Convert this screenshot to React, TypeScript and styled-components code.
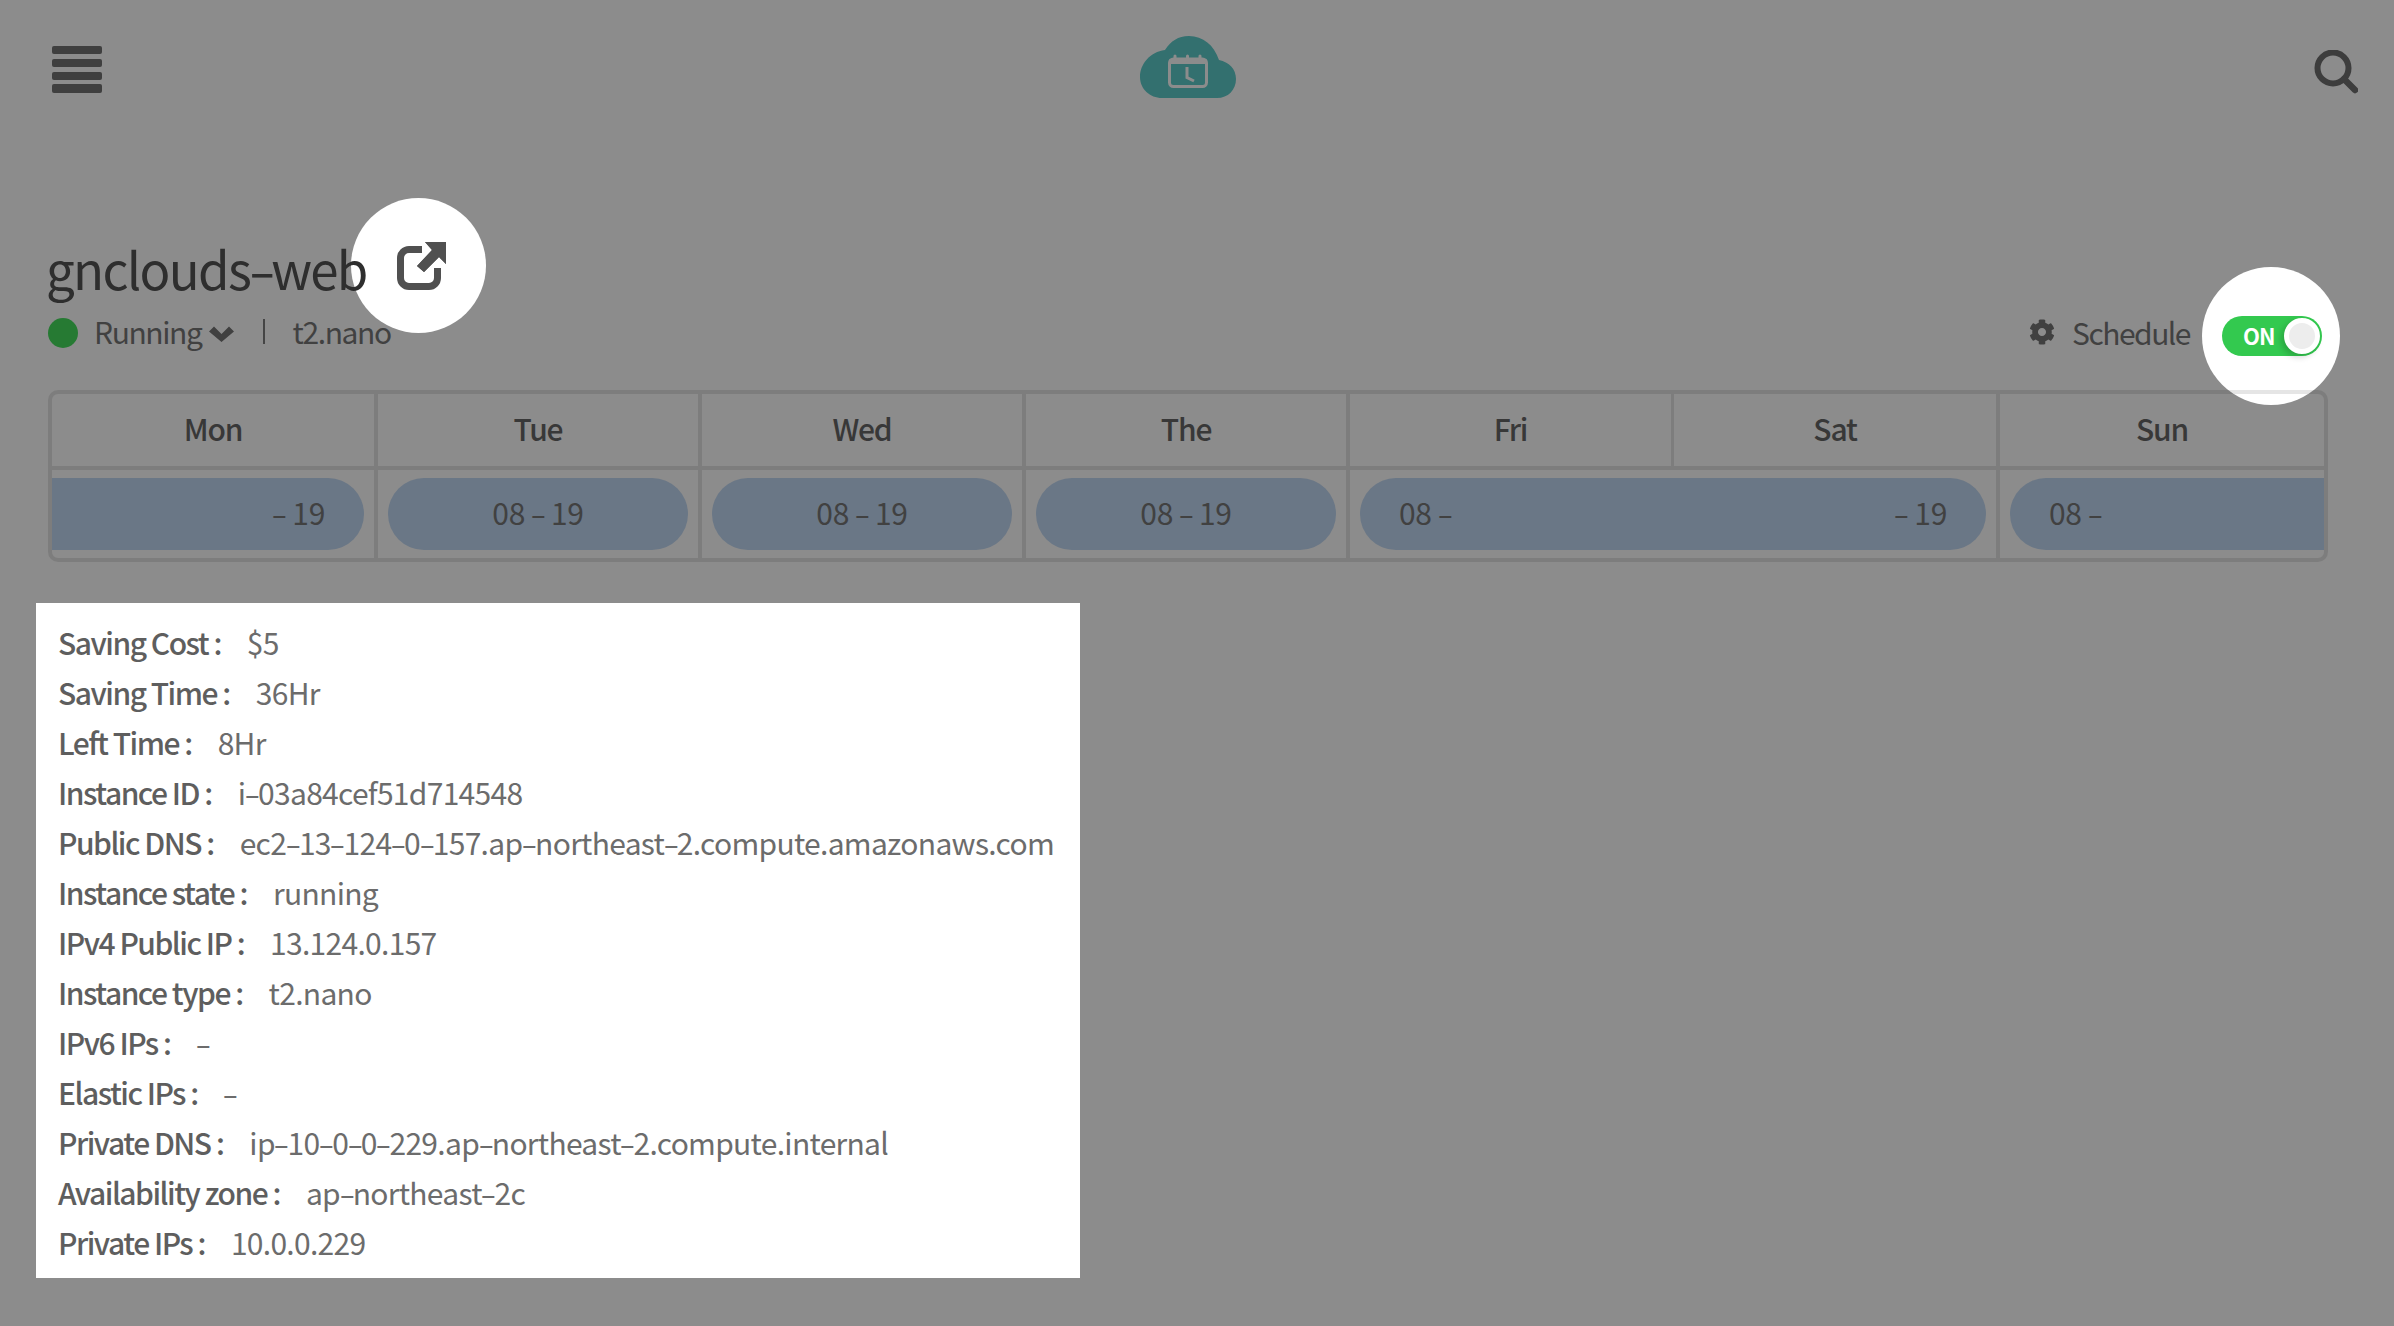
import React from "react";
import styled, { createGlobalStyle } from "styled-components";
import { FaCog } from "react-icons/fa";

const Global = createGlobalStyle`
  html, body { margin: 0; padding: 0; background: #8c8c8c; }
  body { font-family: "Noto Sans CJK KR", "Noto Sans", sans-serif; }
  * { box-sizing: border-box; }
`;

const Page = styled.div`
  position: relative;
  isolation: isolate;
  width: 2394px;
  height: 1326px;
  overflow: hidden;
  background: #8c8c8c;
`;

const TopBar = styled.header`
  display: grid;
  grid-template-columns: 1088px 96px 1fr;
  align-items: start;
  height: 62px;
  margin-top: 36px;
  padding: 0 36px 0 52px;
`;

const Burger = styled.div`
  display: flex;
  flex-direction: column;
  gap: 4.4px;
  width: 50px;
  margin-top: 10px;
`;

const BurgerBar = styled.span`
  display: block;
  height: 8.4px;
  border-radius: 2px;
  background: #3f3f3f;
`;

const SearchButton = styled.div`
  justify-self: end;
  width: 44px;
  height: 44px;
  margin-top: 14px;
  display: flex;
`;

const Summary = styled.section`
  position: relative;
  display: flex;
  justify-content: space-between;
  align-items: flex-end;
  height: 260px;
  padding: 0 72px 0 48px;
`;

const TitleBlock = styled.div`
  position: relative;
  padding-bottom: 6px;
`;

const Title = styled.h1`
  position: relative;
  z-index: 1;
  margin: 0 0 8px -2px;
  font-size: 51px;
  font-weight: 400;
  line-height: 68px;
  letter-spacing: -1.7px;
  color: #2e2e2e;
`;

const LinkSpot = styled.div`
  position: absolute;
  z-index: 0;
  left: 303px;
  top: -36px;
  width: 135px;
  height: 135px;
  border-radius: 50%;
  background: #fff;
  display: flex;
  align-items: center;
  justify-content: center;
  padding-left: 6px;
`;

const Meta = styled.div`
  position: relative;
  z-index: 1;
  display: flex;
  align-items: center;
  height: 42px;
  font-size: 30px;
  letter-spacing: -1.4px;
  color: #414141;
`;

const StatusDot = styled.span`
  width: 30px;
  height: 30px;
  border-radius: 50%;
  background: #267a33;
  margin: 4px 16px 0 0;
`;

const ChevronWrap = styled.span`
  display: flex;
  margin: 6px 0 0 7px;
`;

const MetaDivider = styled.span`
  width: 2px;
  height: 25px;
  background: #454545;
  margin: 0 28px 0 29px;
`;

const ScheduleControl = styled.div`
  display: flex;
  align-items: center;
  height: 40px;
  margin-bottom: 2px;
  font-size: 30px;
  letter-spacing: -1.5px;
  color: #414141;
`;

const ScheduleLabel = styled.div`
  display: flex;
  align-items: center;
  margin-bottom: 9px;
`;

const GearWrap = styled.span`
  display: flex;
  margin-right: 17px;
  color: #404040;
`;

const ToggleTrack = styled.div`
  position: relative;
  width: 100px;
  height: 40px;
  margin-left: 32px;
  border-radius: 20px;
  display: flex;
  align-items: center;
  z-index: 0;
  &::before {
    content: "";
    position: absolute;
    z-index: -2;
    left: -20px;
    top: -49px;
    width: 138px;
    height: 138px;
    border-radius: 50%;
    background: #fff;
  }
  &::after {
    content: "";
    position: absolute;
    inset: 0;
    z-index: -1;
    border-radius: 20px;
    background: #33c94f;
  }
`;

const ToggleLabel = styled.span`
  margin: 0 0 3px 21px;
  font-size: 22px;
  font-weight: 700;
  letter-spacing: -1px;
  color: #fff;
`;

const ToggleKnob = styled.span`
  position: absolute;
  right: 2px;
  top: 2px;
  width: 36px;
  height: 36px;
  border-radius: 50%;
  border: 5px solid #fff;
  background: #ededed;
  box-shadow: -3px 3px 6px rgba(0, 0, 0, 0.18);
`;

const WeekTable = styled.section`
  position: relative;
  z-index: 1;
  margin: 32px 0 0 48px;
  width: 2280px;
  border: 4px solid rgba(0, 0, 0, 0.1);
  border-radius: 10px;
`;

const WeekGrid = styled.div`
  display: grid;
  grid-template-columns: 326px 324px 324px 324px 324px 326px 1fr;
`;

const DayHead = styled.div<{ $rule: number }>`
  height: 76px;
  padding-bottom: 5px;
  display: flex;
  align-items: center;
  justify-content: center;
  border-bottom: 4px solid rgba(0, 0, 0, 0.1);
  border-right: ${(p) => p.$rule}px solid rgba(0, 0, 0, 0.1);
  font-size: 30px;
  font-weight: 500;
  letter-spacing: -1.2px;
  color: #383838;
`;

const DayCell = styled.div<{ $span?: number; $last?: boolean }>`
  grid-column: span ${(p) => p.$span ?? 1};
  height: 88px;
  padding-top: 8px;
  border-right: ${(p) => (p.$last ? "0" : "4px solid rgba(0, 0, 0, 0.1)")};
`;

const TimeBar = styled.div<{ $open: "left" | "right" | "none" }>`
  height: 72px;
  display: flex;
  align-items: center;
  justify-content: ${(p) => (p.$open === "none" ? "space-between" : p.$open === "left" ? "flex-end" : "flex-start")};
  padding: 0 39px 5px;
  margin: ${(p) => (p.$open === "left" ? "0 10px 0 0" : p.$open === "right" ? "0 0 0 10px" : "0 10px")};
  border-radius: ${(p) => (p.$open === "left" ? "0 36px 36px 0" : p.$open === "right" ? "36px 0 0 36px" : "36px")};
  background: #6a7786;
  font-size: 30px;
  letter-spacing: -0.3px;
  color: #414141;
`;

const CenteredTime = styled.span`
  flex: 1;
  text-align: center;
`;

const InfoCard = styled.section`
  margin: 41px 0 0 36px;
  width: 1044px;
  height: 675px;
  padding: 14px 22px;
  background: #fff;
`;

const InfoRow = styled.div`
  display: flex;
  align-items: center;
  height: 50px;
  font-size: 30px;
  letter-spacing: -0.7px;
  color: #6c6c6c;
  white-space: nowrap;
`;

const InfoLabel = styled.span`
  font-weight: 500;
  letter-spacing: -1.5px;
  color: #5e5e5e;
  margin-right: 26px;
`;

const Dash = styled.span`
  display: inline-block;
  margin: 0 0.05em;
  transform: scaleX(1.55);
`;

const withDashes = (text: string) =>
  text.split("-").flatMap((part, i) => (i === 0 ? [part] : [<Dash key={i}>-</Dash>, part]));

const days = ["Mon", "Tue", "Wed", "The", "Fri", "Sat", "Sun"];

const info: [string, string][] = [
  ["Saving Cost", "$5"],
  ["Saving Time", "36Hr"],
  ["Left Time", "8Hr"],
  ["Instance ID", "i-03a84cef51d714548"],
  ["Public DNS", "ec2-13-124-0-157.ap-northeast-2.compute.amazonaws.com"],
  ["Instance state", "running"],
  ["IPv4 Public IP", "13.124.0.157"],
  ["Instance type", "t2.nano"],
  ["IPv6 IPs", "-"],
  ["Elastic IPs", "-"],
  ["Private DNS", "ip-10-0-0-229.ap-northeast-2.compute.internal"],
  ["Availability zone", "ap-northeast-2c"],
  ["Private IPs", "10.0.0.229"],
];

const CloudLogo = () => (
  <svg width="96" height="62" viewBox="0 0 96 62">
    <path
      d="M22 62C10 62 0 53 0 41C0 28 10 16 25 14C31 5 38 0 49 0C63 0 74 9 79 24C89 26 96 33 96 43C96 54 88 62 77 62Z"
      fill="#33706f"
    />
    <rect x="29.5" y="23" width="37" height="27.5" rx="4" fill="none" stroke="#8c8c8c" strokeWidth="3" />
    <path d="M29.5 25.5H66.5" stroke="#8c8c8c" strokeWidth="5" />
    <path d="M35 20V24M47.5 20V24M60 20V24" stroke="#8c8c8c" strokeWidth="3" strokeLinecap="round" />
    <path d="M47 31V41.5L54 45" fill="none" stroke="#8c8c8c" strokeWidth="3" />
  </svg>
);

const SearchIcon = () => (
  <svg width="44" height="44" viewBox="0 0 44 44">
    <circle cx="19" cy="18" r="15.5" fill="none" stroke="#3d3d3d" strokeWidth="6" />
    <path d="M30 29L41 40" stroke="#3d3d3d" strokeWidth="6.5" strokeLinecap="round" />
  </svg>
);

const ExternalIcon = () => (
  <svg width="49" height="48" viewBox="0 0 49 48">
    <path
      d="M25 7.5H12a8.5 8.5 0 0 0-8.5 8.5V36a8.5 8.5 0 0 0 8.5 8.5H32a8.5 8.5 0 0 0 8.5-8.5V26"
      fill="none"
      stroke="#505050"
      strokeWidth="7"
    />
    <path d="M28 0H49V22L42 15L27 30L20 24L35 8Z" fill="#505050" stroke="#fff" strokeWidth="2" paintOrder="stroke" />
    <path d="M28 0H49V22L42 15L27 30L20 24L35 8Z" fill="#505050" />
  </svg>
);

const ChevronIcon = () => (
  <svg width="25" height="16" viewBox="0 0 25 16">
    <path d="M0 5.5L5 0.5L12.5 8L20 0.5L25 5.5L12.5 16Z" fill="#404040" />
  </svg>
);

export default function App() {
  return (
    <Page>
      <Global />
      <TopBar>
        <Burger>
          <BurgerBar />
          <BurgerBar />
          <BurgerBar />
          <BurgerBar />
        </Burger>
        <CloudLogo />
        <SearchButton>
          <SearchIcon />
        </SearchButton>
      </TopBar>

      <Summary>
        <TitleBlock>
          <LinkSpot>
            <ExternalIcon />
          </LinkSpot>
          <Title>{withDashes("gnclouds-web")}</Title>
          <Meta>
            <StatusDot />
            Running
            <ChevronWrap>
              <ChevronIcon />
            </ChevronWrap>
            <MetaDivider />
            t2.nano
          </Meta>
        </TitleBlock>
        <ScheduleControl>
          <ScheduleLabel>
            <GearWrap>
              <FaCog size={26} />
            </GearWrap>
            Schedule
          </ScheduleLabel>
          <ToggleTrack>
            <ToggleLabel>ON</ToggleLabel>
            <ToggleKnob />
          </ToggleTrack>
        </ScheduleControl>
      </Summary>

      <WeekTable>
        <WeekGrid>
          {days.map((d, i) => (
            <DayHead key={d} $rule={i === days.length - 1 ? 0 : d === "Fri" ? 3 : 4}>
              {d}
            </DayHead>
          ))}
          <DayCell>
            <TimeBar $open="left">
              <span>{withDashes("- 19")}</span>
            </TimeBar>
          </DayCell>
          {["Tue", "Wed", "The"].map((d) => (
            <DayCell key={d}>
              <TimeBar $open="none">
                <CenteredTime>{withDashes("08 - 19")}</CenteredTime>
              </TimeBar>
            </DayCell>
          ))}
          <DayCell $span={2}>
            <TimeBar $open="none">
              <span>{withDashes("08 -")}</span>
              <span>{withDashes("- 19")}</span>
            </TimeBar>
          </DayCell>
          <DayCell $last>
            <TimeBar $open="right">
              <span>{withDashes("08 -")}</span>
            </TimeBar>
          </DayCell>
        </WeekGrid>
      </WeekTable>

      <InfoCard>
        {info.map(([label, value]) => (
          <InfoRow key={label}>
            <InfoLabel>{label} :</InfoLabel>
            <span>{withDashes(value)}</span>
          </InfoRow>
        ))}
      </InfoCard>
    </Page>
  );
}
